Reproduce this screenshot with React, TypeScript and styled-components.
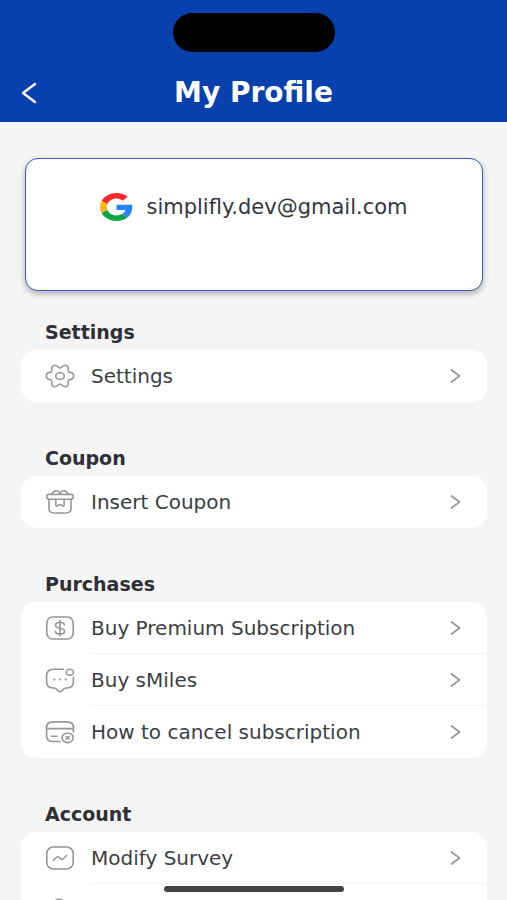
import React from "react";
import styled, { createGlobalStyle } from "styled-components";

const GlobalStyle = createGlobalStyle`
  * { box-sizing: border-box; }
  html, body, #root { height: 100%; }
  body {
    margin: 0;
    background: #f5f5f5;
    color: #3c3e43;
    font-family: "DejaVu Sans", Verdana, sans-serif;
  }
`;

const Screen = styled.div`
  height: 100%;
  overflow: hidden;
  display: flex;
  flex-direction: column;
`;

const Header = styled.header`
  flex: none;
  background: #0840ad;
  padding: 13px 20px 8px;
  display: flex;
  flex-direction: column;
  gap: 20px;
`;

const Island = styled.div`
  width: 162px;
  height: 39px;
  border-radius: 20px;
  background: #000;
  align-self: center;
`;

const TitleBar = styled.div`
  display: grid;
  grid-template-columns: 40px 1fr 40px;
  align-items: center;
  height: 42px;
`;

const BackButton = styled.button`
  display: flex;
  align-items: center;
  width: 40px;
  height: 40px;
  padding: 0;
  border: 0;
  background: none;
  color: #fff;
  cursor: pointer;
`;

const Title = styled.h1`
  margin: 0;
  color: #fff;
  font-size: 28px;
  line-height: 36px;
  font-weight: 700;
  text-align: center;
  white-space: nowrap;
`;

const Content = styled.main`
  flex: 1;
  min-height: 0;
  overflow: hidden;
  padding: 36px 20px 0 21px;
`;

const AccountCard = styled.section`
  height: 133px;
  margin: 0 4px;
  padding-top: 34px;
  display: flex;
  justify-content: center;
  align-items: flex-start;
  gap: 13px;
  background: #fff;
  border: 1px solid #3c5abb;
  border-radius: 13px;
  box-shadow: 0 3px 6px rgba(0, 0, 0, 0.28);
`;

const Email = styled.span`
  font-size: 21px;
  line-height: 28px;
  color: #34363c;
`;

const Group = styled.section`
  display: flex;
  flex-direction: column;
`;

const GroupTitle = styled.h2<{ $first?: boolean }>`
  margin: 0;
  padding: ${(p) => (p.$first ? "29px" : "44px")} 24px 6px;
  font-size: 19px;
  line-height: 24px;
  font-weight: 700;
  color: #2e3036;
`;

const List = styled.ul`
  margin: 0;
  padding: 0;
  list-style: none;
  background: #fff;
  border-radius: 15px;
  overflow: hidden;
`;

const Row = styled.button`
  display: flex;
  align-items: stretch;
  width: 100%;
  height: 52px;
  padding: 0 0 0 24px;
  border: 0;
  background: none;
  font: inherit;
  color: inherit;
  text-align: left;
  cursor: pointer;
`;

const IconSlot = styled.span`
  flex: none;
  display: flex;
  align-items: center;
  width: 46px;
  color: #979797;
`;

const RowBody = styled.span<{ $divided: boolean }>`
  flex: 1;
  min-width: 0;
  display: flex;
  align-items: center;
  justify-content: space-between;
  padding-right: 26px;
  box-shadow: ${(p) => (p.$divided ? "inset 0 -1px #f3f3f3" : "none")};
`;

const Label = styled.span`
  font-size: 20px;
  line-height: 26px;
  white-space: nowrap;
`;

const HomeIndicator = styled.div`
  position: fixed;
  left: 50%;
  bottom: 8px;
  width: 180px;
  height: 6px;
  margin-left: -90px;
  border-radius: 3px;
  background: #444;
`;

const Glyph = ({ children }: { children: React.ReactNode }) => (
  <svg width="30" height="26" viewBox="0 0 30 26" fill="none" stroke="currentColor"
    strokeWidth="1.6" strokeLinecap="round" strokeLinejoin="round" aria-hidden="true">
    {children}
  </svg>
);

const BackIcon = () => (
  <svg width="18" height="22" viewBox="0 0 18 22" fill="none" stroke="currentColor"
    strokeWidth="2.4" strokeLinecap="round" strokeLinejoin="round" aria-hidden="true">
    <path d="M15 2 3 11l12 9" />
  </svg>
);

const ChevronIcon = () => (
  <svg width="11" height="14" viewBox="0 0 11 14" fill="none" stroke="#969696"
    strokeWidth="1.7" strokeLinecap="round" strokeLinejoin="round" aria-hidden="true">
    <path d="M1.5 1 9.500 7l-8 6" />
  </svg>
);

const GoogleIcon = () => (
  <svg width="33" height="28" viewBox="0 0 48 48" preserveAspectRatio="none" role="img" aria-label="Google">
    <path fill="#f9292b" d="M24 9.5c3.54 0 6.71 1.22 9.21 3.6l6.85-6.85C35.9 2.38 30.47 0 24 0 14.62 0 6.51 5.38 2.56 13.22l7.98 6.19C12.43 13.72 17.74 9.5 24 9.5z" />
    <path fill="#2684fc" d="M46.98 24.55c0-1.57-.15-3.09-.38-4.55H24v9.02h12.94c-.58 2.96-2.26 5.48-4.78 7.18l7.73 6c4.51-4.18 7.09-10.36 7.09-17.65z" />
    <path fill="#fdb913" d="M10.53 28.59c-.48-1.45-.76-2.99-.76-4.59s.27-3.14.76-4.59l-7.98-6.19C.92 16.46 0 20.12 0 24c0 3.88.92 7.54 2.56 10.78l7.97-6.19z" />
    <path fill="#09a646" d="M24 48c6.48 0 11.93-2.13 15.89-5.81l-7.73-6c-2.15 1.45-4.92 2.3-8.16 2.3-6.26 0-11.57-4.22-13.47-9.91l-7.98 6.19C6.51 42.62 14.62 48 24 48z" />
  </svg>
);

const SettingsIcon = () => (
  <Glyph>
    <path d="M15 5C17 5 17.200 2.200 19.600 2.200C22.400 2.200 24 4.300 23.300 6.400C22.700 8.300 23.400 9.200 25.300 9.400C27.500 9.600 28.600 11.200 28.600 13C28.600 14.800 27.500 16.400 25.300 16.600C23.400 16.800 22.700 17.700 23.300 19.600C24 21.700 22.400 23.800 19.600 23.800C17.200 23.800 17 21 15 21C13 21 12.800 23.800 10.400 23.800C7.600 23.800 6 21.700 6.700 19.600C7.300 17.700 6.600 16.800 4.700 16.600C2.500 16.400 1.400 14.800 1.400 13C1.400 11.200 2.500 9.600 4.700 9.400C6.600 9.200 7.300 8.300 6.700 6.400C6 4.300 7.600 2.200 10.400 2.200C12.800 2.200 13 5 15 5Z" />
    <ellipse cx="15" cy="13" rx="4.200" ry="3.500" />
  </Glyph>
);

const GiftIcon = () => (
  <Glyph>
    <rect x="1.800" y="5.400" width="26.400" height="4.800" rx="2.200" />
    <path d="M4 10.200v9.400c0 3 1.800 4.400 5 4.400h12c3.200 0 5-1.400 5-4.400v-9.400" />
    <path d="M7 5.300c.6-1.900 2.100-3.500 4-3.500s3.500 1.400 4 3.500c.5-2.100 2.100-3.500 4-3.500s3.400 1.600 4 3.500" />
    <path d="M10.800 10.400v5.600c0 .9 1 1.300 1.700.8l1.600-1.100c.5-.3 1.200-.3 1.700 0l1.600 1.100c.7.5 1.700.1 1.700-.8v-5.600" />
  </Glyph>
);

const DollarIcon = () => (
  <Glyph>
    <rect x="1.800" y="2" width="26.400" height="22" rx="6" />
    <path d="M19.500 9.800c-.5-1.500-2-2.500-4.500-2.500s-4.500 1-4.500 2.900c0 2.100 2.100 2.600 4.500 3s4.600.9 4.600 3c0 1.900-2 2.900-4.600 2.900s-4.300-1-4.700-2.600M15 5.600v15.200" />
  </Glyph>
);

const ChatIcon = () => (
  <Glyph>
    <path d="M18.500 2.200H9C4 2.200 1.600 4.400 1.600 8.800v6c0 4.200 2.100 6.200 6.600 6.200 1.600 0 2.400.4 3.300 1.200l1.700 1.600c1 1 2.600 1 3.600 0l1.700-1.600c.9-.8 1.700-1.200 3.300-1.200 4.500 0 6.600-2 6.600-6.200v-4.600" />
    <ellipse cx="24.800" cy="5.200" rx="3.600" ry="3" />
    <path d="M9.300 12.500h.1M15 12.500h.1M20.600 12.500h.1" strokeWidth="2.200" />
  </Glyph>
);

const CardIcon = () => (
  <Glyph>
    <path d="M15 22.500H8.300c-4.700 0-6.700-1.500-6.700-5.600V8.500c0-4.100 2-5.600 6.700-5.600h13.400c4.700 0 6.700 1.500 6.700 5.600V13M1.600 9.600h26.800M6.500 17.200H12" />
    <ellipse cx="22.600" cy="18.800" rx="5.600" ry="4.800" />
    <path d="m21.200 17.600 2.800 2.400m0-2.400-2.800 2.400" />
  </Glyph>
);

const SurveyIcon = () => (
  <Glyph>
    <rect x="1.800" y="2" width="26.400" height="22" rx="6.500" />
    <path d="m8.300 15.500 3-3.200c.6-.6 1.500-.7 2.200-.2l2.600 1.900c.7.500 1.600.4 2.200-.2l3.400-3.300" />
  </Glyph>
);

const UserIcon = () => (
  <Glyph>
    <ellipse cx="14" cy="8" rx="6" ry="5.600" />
    <path d="M3 24.500c0-4.400 4.800-7.500 11-7.500s11 3.100 11 7.500" />
  </Glyph>
);

type Item = { label: string; Icon: React.ComponentType };

const groups: { title: string; items: Item[] }[] = [
  { title: "Settings", items: [{ label: "Settings", Icon: SettingsIcon }] },
  { title: "Coupon", items: [{ label: "Insert Coupon", Icon: GiftIcon }] },
  {
    title: "Purchases",
    items: [
      { label: "Buy Premium Subscription", Icon: DollarIcon },
      { label: "Buy sMiles", Icon: ChatIcon },
      { label: "How to cancel subscription", Icon: CardIcon },
    ],
  },
  {
    title: "Account",
    items: [
      { label: "Modify Survey", Icon: SurveyIcon },
      { label: "", Icon: UserIcon },
    ],
  },
];

export default function App() {
  return (
    <>
      <GlobalStyle />
      <Screen>
        <Header>
          <Island />
          <TitleBar>
            <BackButton type="button" aria-label="Back">
              <BackIcon />
            </BackButton>
            <Title>My Profile</Title>
          </TitleBar>
        </Header>
        <Content>
          <AccountCard>
            <GoogleIcon />
            <Email>simplifly.dev@gmail.com</Email>
          </AccountCard>
          {groups.map((group, g) => (
            <Group key={group.title}>
              <GroupTitle $first={g === 0}>{group.title}</GroupTitle>
              <List>
                {group.items.map(({ label, Icon }, i) => (
                  <li key={i}>
                    <Row type="button" aria-label={label || "Account"}>
                      <IconSlot>
                        <Icon />
                      </IconSlot>
                      <RowBody $divided={i < group.items.length - 1}>
                        <Label>{label}</Label>
                        <ChevronIcon />
                      </RowBody>
                    </Row>
                  </li>
                ))}
              </List>
            </Group>
          ))}
        </Content>
      </Screen>
      <HomeIndicator />
    </>
  );
}
